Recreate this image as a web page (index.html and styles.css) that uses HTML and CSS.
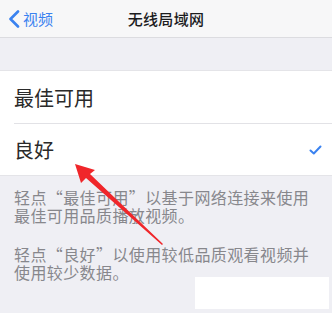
FILE: index.html
```html
<!DOCTYPE html>
<html lang="zh-CN">

<head>
    <meta charset="UTF-8">
    <meta name="viewport" content="width=device-width, initial-scale=1.0">
    <title>无线局域网</title>
    <link rel="stylesheet" href="styles.css">
</head>

<body>
    <div class="screen">
        <div class="nav">
            <div class="back">
                <svg class="chevron" width="12" height="18" viewBox="0 0 12 18">
                    <path d="M10 1.5 L2.5 9 L10 16.5" fill="none" stroke="#3a82f0" stroke-width="2.6" stroke-linecap="round" stroke-linejoin="round" />
                </svg>
                <span>视频</span>
            </div>
            <div class="title">无线局域网</div>
        </div>

        <div class="gap"></div>

        <div class="group">
            <div class="row">
                <span>最佳可用</span>
            </div>
            <div class="row">
                <span>良好</span>
                <svg class="check" width="13" height="10" viewBox="0 0 13 10">
                    <path d="M1.5 5.5 L4.8 8.5 L11.5 1.5" fill="none" stroke="#3a82f0" stroke-width="2" stroke-linecap="round" stroke-linejoin="round" />
                </svg>
            </div>
        </div>

        <div class="footer">
            <p>轻点“最佳可用”以基于网络连接来使用最佳可用品质播放视频。</p>
            <p>轻点“良好”以使用较低品质观看视频并使用较少数据。</p>
        </div>

        <!-- annotation overlay -->
        <svg class="arrow" width="332" height="313" viewBox="0 0 332 313">
            <polygon points="75,164 95,170 90,174 163,244 162,245 86,178 81,183" fill="#f0262a" />
        </svg>
        <div class="patch"></div>
    </div>
</body>

</html>
```

FILE: styles.css
```css
* {
    box-sizing: border-box;
}

body {
    margin: 0;
    background: #efeff4;
    font-family: "Noto Sans CJK SC", "Noto Sans", sans-serif;
}

.screen {
    position: relative;
    width: 332px;
    height: 313px;
    overflow: hidden;
    background: #efeff4;
}

.nav {
    position: relative;
    height: 38px;
    background: #f7f7f8;
    border-bottom: 1px solid #dcdce0;
    display: flex;
    align-items: center;
    justify-content: center;
}

.back {
    position: absolute;
    left: 8px;
    top: 0;
    height: 37px;
    display: flex;
    align-items: center;
    gap: 3px;
    color: #3a82f0;
    font-size: 15px;
}

.title {
    font-size: 15px;
    font-weight: 500;
    color: #1c1c1e;
    letter-spacing: 0.3px;
}

.gap {
    height: 32px;
}

.group {
    background: #fff;
    border-top: 1px solid #e4e4e8;
    border-bottom: 1px solid #e4e4e8;
}

.row {
    height: 52px;
    margin-left: 14px;
    padding-right: 10px;
    display: flex;
    align-items: center;
    justify-content: space-between;
    font-size: 20px;
    color: #2a2a2a;
}

.row + .row {
    border-top: 1px solid #e2e2e6;
}

.footer {
    padding: 12px 14px 0;
    color: #87878c;
    font-size: 16px;
    line-height: 18px;
    letter-spacing: 0.4px;
}

.footer p {
    margin: 0 0 21px;
}

.arrow {
    position: absolute;
    left: 0;
    top: 0;
}

.patch {
    position: absolute;
    left: 195px;
    top: 277px;
    width: 134px;
    height: 32px;
    background: #fff;
}
```
